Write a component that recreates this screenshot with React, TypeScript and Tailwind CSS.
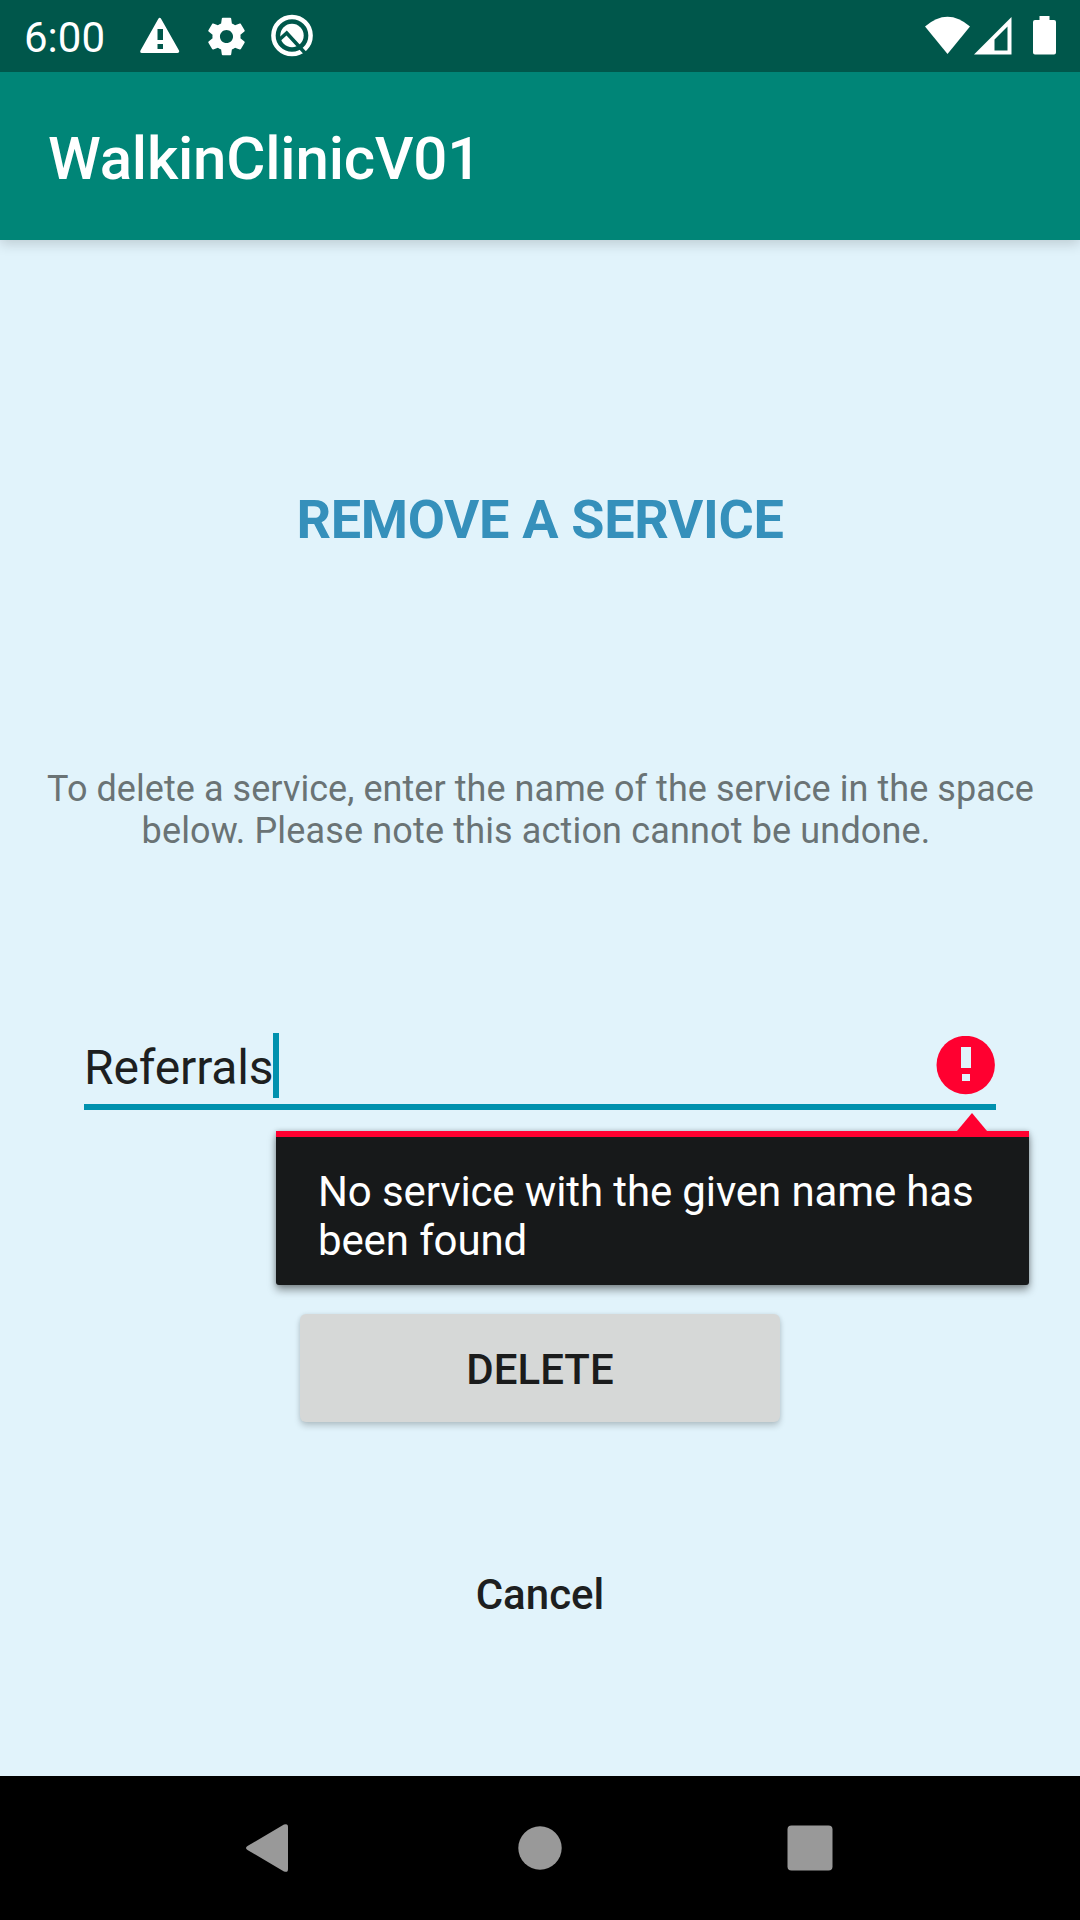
function StatusBar() {
  return (
    <div className="relative z-10 flex h-[72px] items-center justify-between bg-[#00574b] pl-6 text-white">
      <div className="flex items-center">
        <span className="w-[106px] pt-[3px] text-[42px] leading-[49px] whitespace-nowrap">6:00</span>
        <svg className="ml-2.5" width="40" height="72" viewBox="0 0 40 72" fill="currentColor">
          <path fillRule="evenodd" d="M18.2 19q1.5-2.400 3 0L39 50.500q.8 2.500-1.500 2.500H2q-2.500 0-1.500-2.500ZM17.500 29v11H23V29Zm0 15v5H23v-5Z" />
        </svg>
        <svg className="ml-[24px]" width="45" height="45" viewBox="0 0 24 24" fill="currentColor">
          <path d="M19.430 12.980c.04-.32.070-.64.070-.98s-.03-.66-.070-.98l2.110-1.650c.19-.15.240-.42.120-.64l-2-3.460c-.12-.22-.39-.3-.61-.22l-2.490 1c-.52-.4-1.080-.73-1.690-.98l-.38-2.650C14.460 2.180 14.250 2 14 2h-4c-.25 0-.46.180-.49.420l-.38 2.650c-.61.250-1.170.590-1.690.98l-2.490-1c-.23-.09-.49 0-.61.220l-2 3.460c-.13.220-.07.490.12.640l2.110 1.650c-.04.320-.07.650-.07.980s.03.660.07.980l-2.110 1.650c-.19.150-.24.420-.12.640l2 3.460c.12.220.39.300.61.220l2.490-1c.52.400 1.080.730 1.690.980l.38 2.650c.03.240.24.420.49.420h4c.25 0 .46-.18.490-.42l.38-2.650c.61-.25 1.170-.59 1.690-.98l2.490 1c.23.090.49 0 .61-.22l2-3.460c.12-.22.070-.49-.12-.64l-2.110-1.650zM12 15.500c-1.930 0-3.500-1.570-3.500-3.500s1.570-3.500 3.500-3.500 3.500 1.570 3.500 3.500-1.570 3.500-3.500 3.500z" />
        </svg>
        <svg className="ml-[21px]" width="44" height="72" viewBox="0 0 44 72" fill="none">
          <circle cx="22" cy="35.500" r="18.600" stroke="white" strokeWidth="4.500" />
          <circle cx="22" cy="35.500" r="11.700" fill="white" />
          <path d="M9.500 39.500 16.700 33 35.500 53.500" stroke="#00574b" strokeWidth="3.600" />
        </svg>
      </div>
      <svg width="160" height="72" viewBox="920 0 160 72" fill="currentColor">
        <path d="M925 26.500Q947.500 7 970 26.500L947.500 54Z" />
        <path fillRule="evenodd" d="M974 54.500 1011.500 17V54.500ZM994.500 39.500V50.500H1007.500V26.500Z" />
        <path d="M1039.500 16h10v4h4.500q2 0 2 2v30.500q0 2-2 2h-19q-2 0-2-2V22q0-2 2-2h4.500Z" />
      </svg>
    </div>
  );
}

function ErrorPopup() {
  return (
    <div className="absolute top-[101px] left-[192px] w-[753px]">
      <svg className="absolute -top-[18px] left-[681px]" width="30" height="19" viewBox="0 0 30 19">
        <path d="M15 0 30 18V19H0V18Z" fill="#ff0030" />
      </svg>
      <div className="h-[154px] rounded-b-[3px] border-t-[6px] border-[#ff0030] bg-[#17191a] pt-[30px] pl-[42px] shadow-[0_5px_8px_rgba(0,0,0,0.4),0_0_5px_rgba(0,0,0,0.2)]">
        <p className="text-[42px] leading-[49px] tracking-[-0.12px] whitespace-nowrap text-white">
          No service with the given name has
          <br />
          been found
        </p>
      </div>
    </div>
  );
}

function NameField() {
  return (
    <div className="relative mx-[84px] mt-[178px] h-[80px] border-b-[6px] border-[#0091ae]">
      <div className="flex h-[74px] items-start justify-between">
        <div className="flex items-start pt-px">
          <span className="w-[189px] pt-[9px] text-[48px] leading-[56px] tracking-[-0.15px] whitespace-nowrap text-[#1d1f20]">
            Referrals
          </span>
          <span className="mt-[2px] h-[65px] w-[6px] bg-[#0091ae]" />
        </div>
        <svg className="mt-1.5" width="60" height="60" viewBox="0 0 60 60">
          <circle cx="29.700" cy="29" r="29.200" fill="#ff0030" />
          <path d="M25 11h10v21H25Zm1 27h8v7h-8Z" fill="#e1f3fb" />
        </svg>
      </div>
      <ErrorPopup />
    </div>
  );
}

function NavBar() {
  return (
    <div className="flex h-[144px] items-center justify-center bg-black">
      <svg width="680" height="144" viewBox="200 0 680 144" fill="#999">
        <path d="M247.500 70 284 48.600Q288 47 288 51V93Q288 97 284 95.400L247.500 74Q244.500 72 247.500 70Z" />
        <circle cx="540" cy="72" r="21.700" />
        <rect x="787.500" y="49.500" width="45" height="45" rx="4" />
      </svg>
    </div>
  );
}

export default function App() {
  return (
    <div className="flex h-[1920px] w-[1080px] flex-col overflow-hidden bg-[#e1f3fb] font-['Roboto',sans-serif]">
      <StatusBar />
      <header className="flex h-[168px] items-center bg-[#008577] pt-1.5 pl-12 shadow-[0_4px_12px_rgba(0,0,0,0.16)]">
        <h1 className="text-[60px] leading-[70px] font-medium tracking-[-0.2px] whitespace-nowrap text-white">
          WalkinClinicV01
        </h1>
      </header>
      <main className="flex flex-1 flex-col">
        <h2 className="mt-[248px] text-center text-[54px] leading-[64px] font-bold tracking-[-0.33px] text-[#3590bb]">
          REMOVE A SERVICE
        </h2>
        <p className="mt-[216px] text-center text-[36px] leading-[42px] whitespace-nowrap text-[#6a7375]">
          <span className="block pl-px tracking-[0.06px]">To delete a service, enter the name of the service in the space</span>
          <span className="block pr-2 tracking-[0.15px]">below. Please note this action cannot be undone.</span>
        </p>
        <NameField />
        <button className="mx-auto mt-[204px] h-[108px] w-[480px] rounded-[6px] bg-[#d6d8d7] pt-0.5 text-[42px] leading-[49px] font-medium text-[#1b1c1c] shadow-[0_4px_6px_rgba(0,0,0,0.18),0_0_4px_rgba(0,0,0,0.08)]">
          DELETE
        </button>
        <button className="mx-auto mt-[148px] text-[42px] leading-[49px] font-medium text-[#1d1f20]">Cancel</button>
      </main>
      <NavBar />
    </div>
  );
}
